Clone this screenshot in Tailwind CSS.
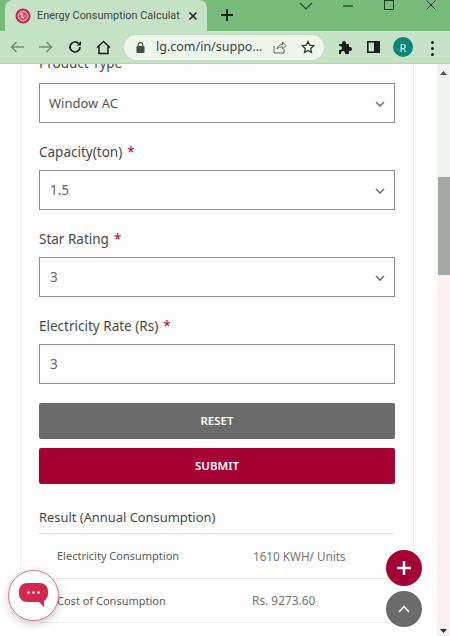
<!doctype html>
<html><head><meta charset="utf-8"><script src="https://cdn.jsdelivr.net/npm/@tailwindcss/browser@4"></script></head>
<body class="m-0 overflow-hidden">
<div class="relative w-[450px] h-[636px] overflow-hidden flex flex-col bg-white font-['Noto_Sans',sans-serif]">
  <!-- tab strip -->
  <div class="h-[31px] shrink-0 bg-[#76bb7c] flex items-end pl-[5px] relative">
    <div class="w-[202px] h-[31px] bg-[#c5e1c6] rounded-t-[8px] flex items-center pl-[10px] pr-[8px]">
      <svg width="16" height="16" viewBox="0 0 16 16" class="shrink-0"><circle cx="8" cy="8" r="7.5" fill="#c8274f"/><circle cx="8" cy="8" r="5" fill="#d65a78" stroke="#f2c0cc" stroke-width="1"/><path d="M7 4.500v5h2" stroke="#f6d5dc" stroke-width="1" fill="none"/><circle cx="5.500" cy="6" r=".8" fill="#f6d5dc"/></svg>
      <span class="ml-[6px] text-[10.900px] leading-[14px] text-[#3c4a3e] whitespace-nowrap w-[144px] font-['Roboto',sans-serif]">Energy Consumption Calculat</span>
      <svg width="10" height="10" viewBox="0 0 10 10" class="ml-[7px] shrink-0"><path d="M1.500 1.500l7 7M8.500 1.500l-7 7" stroke="#222" stroke-width="1.600"/></svg>
    </div>
    <svg width="12" height="12" viewBox="0 0 12 12" class="ml-[14px] mb-[10px]"><path d="M6 0v12M0 6h12" stroke="#1c1c1c" stroke-width="1.800"/></svg>
    <svg width="14" height="8" viewBox="0 0 14 8" class="absolute left-[299px] top-[2px]"><path d="M1 1l6 6 6-6" stroke="#2b4a30" stroke-width="1.100" fill="none"/></svg>
    <svg width="10" height="2" viewBox="0 0 10 2" class="absolute left-[343px] top-[5px]"><path d="M0 1h10" stroke="#1f3a24" stroke-width="1.200"/></svg>
    <svg width="10" height="10" viewBox="0 0 10 10" class="absolute left-[384px] top-[0px]"><rect x=".5" y=".5" width="9" height="9" fill="none" stroke="#1f3a24" stroke-width="1"/></svg>
    <svg width="10" height="10" viewBox="0 0 10 10" class="absolute left-[426px] top-[0px]"><path d="M.5.5l9 9M9.500.5l-9 9" stroke="#1f3a24" stroke-width="1"/></svg>
  </div>
  <!-- toolbar -->
  <div class="h-[33px] shrink-0 bg-[#c5e1c6] border-b border-[#b4d4b6] flex items-center relative">
    <svg width="14" height="12" viewBox="0 0 14 12" class="ml-[10px]"><path d="M14 6H1.500M6.500 1l-5 5 5 5" stroke="#7d8a7e" stroke-width="1.600" fill="none"/></svg>
    <svg width="14" height="12" viewBox="0 0 14 12" class="ml-[15px]"><path d="M0 6h12.500M7.500 1l5 5-5 5" stroke="#7d8a7e" stroke-width="1.600" fill="none"/></svg>
    <svg width="14" height="14" viewBox="0 0 14 14" class="ml-[15px]"><path d="M12 7a5 5 0 1 1-1.500-3.600" stroke="#1d1d1d" stroke-width="1.700" fill="none"/><path d="M13 1v4.500H8.500z" fill="#1d1d1d"/></svg>
    <svg width="15" height="15" viewBox="0 0 15 15" class="ml-[14px]"><path d="M1 7.500L7.500 1.500 14 7.500M3 6.500V13.500H12V6.500" stroke="#1d1d1d" stroke-width="1.500" fill="none"/></svg>
    <div class="ml-[13px] w-[200px] h-[25px] rounded-full bg-[#edf5ed] flex items-center pl-[12px]">
      <svg width="9" height="11" viewBox="0 0 9 11"><rect x="0.500" y="4" width="8" height="7" rx="1" fill="#444f46"/><path d="M2.200 4V2.800a2.300 2.300 0 0 1 4.600 0V4" stroke="#444f46" fill="none" stroke-width="1.100"/></svg>
      <span class="ml-[11px] text-[12.500px] leading-[16px] text-[#3b463d] whitespace-nowrap">lg.com/in/suppo...</span>
      <svg width="14" height="14" viewBox="0 0 14 14" class="absolute left-[273px]"><path d="M1 6v7h10V9" stroke="#5f6a60" stroke-width="1" fill="none"/><path d="M4 9c.5-3 3-4.500 5.500-4.500V2L13 5.500 9.500 9V6.800C7.500 6.800 5.500 7.500 4 9z" stroke="#5f6a60" fill="none" stroke-width="1"/></svg>
      <svg width="14" height="14" viewBox="0 0 14 14" class="absolute left-[301px]"><path d="M7 1.500l1.700 3.700 4 .5-3 2.700.8 4L7 10.500l-3.500 1.900.8-4-3-2.700 4-.5z" stroke="#303a32" stroke-width="1.300" fill="none"/></svg>
    </div>
    <svg width="14" height="14" viewBox="0 0 14 14" class="absolute left-[338px] top-[9px]"><path d="M1 4h3V3a2 2 0 0 1 4 0v1h3v3h1a2 2 0 0 1 0 4h-1v3H7v-1a2 2 0 0 0-4 0v1H1v-4h1a2 2 0 0 0 0-4H1z" fill="#1d1d1d"/></svg>
    <svg width="13" height="12" viewBox="0 0 13 12" class="absolute left-[367px] top-[10px]"><rect x=".8" y=".8" width="11.400" height="10.400" fill="none" stroke="#1d1d1d" stroke-width="1.600"/><rect x="7" y="1" width="5" height="10" fill="#1d1d1d"/></svg>
    <div class="absolute left-[393px] top-[6px] w-[20px] h-[20px] rounded-full bg-[#0a8577] flex items-center justify-center text-[11px] leading-none text-[#e3f2ef]">R</div>
    <div class="absolute left-[431px] top-[10px] flex flex-col gap-[3px]"><i class="block w-[3px] h-[3px] rounded-full bg-[#222]"></i><i class="block w-[3px] h-[3px] rounded-full bg-[#222]"></i><i class="block w-[3px] h-[3px] rounded-full bg-[#222]"></i></div>
  </div>
  <!-- page -->
  <div class="flex-1 flex min-h-0">
    <div class="w-[437px] bg-white overflow-hidden pl-[20px]">
      <div class="w-[394px] h-full bg-[#fdfdfd] border-x border-[#f1ecec] pl-[18px] pr-[18px] -mt-[14px] text-[#444]">
        <div class="text-[13.500px] leading-[27px] h-[33px] text-[#4a4a4a]">Product Type</div>
        <div class="h-[40px] border border-[#8f8f8f] flex items-center justify-between pl-[9px] pr-[9px] pt-[1px] text-[13px] text-[#555]">Window AC
          <svg width="10" height="6" viewBox="0 0 10 6"><path d="M1 1l4 4 4-4" stroke="#6b6b6b" stroke-width="1.500" fill="none"/></svg></div>
        <div class="h-[47px] flex items-center pt-[11px] text-[13.500px] text-[#4a4a4a]">Capacity(ton)<span class="ml-[5px] text-[#a50034]">*</span></div>
        <div class="h-[40px] border border-[#8f8f8f] flex items-center justify-between pl-[10px] pr-[9px] pt-[1px] text-[13.500px] text-[#666]">1.5
          <svg width="10" height="6" viewBox="0 0 10 6"><path d="M1 1l4 4 4-4" stroke="#6b6b6b" stroke-width="1.500" fill="none"/></svg></div>
        <div class="h-[47px] flex items-center pt-[11px] text-[13.500px] text-[#4a4a4a]">Star Rating<span class="ml-[5px] text-[#a50034]">*</span></div>
        <div class="h-[40px] border border-[#8f8f8f] flex items-center justify-between pl-[10px] pr-[9px] pt-[1px] text-[13.500px] text-[#666]">3
          <svg width="10" height="6" viewBox="0 0 10 6"><path d="M1 1l4 4 4-4" stroke="#6b6b6b" stroke-width="1.500" fill="none"/></svg></div>
        <div class="h-[47px] flex items-center pt-[11px] text-[13.500px] text-[#4a4a4a]">Electricity Rate (Rs)<span class="ml-[5px] text-[#a50034]">*</span></div>
        <div class="h-[40px] border border-[#8f8f8f] flex items-center pl-[10px] pt-[1px] text-[13.500px] text-[#666]">3</div>
        <div class="mt-[19px] h-[36px] bg-[#6b6b6b] rounded-[2px] flex items-center justify-center text-white text-[11.500px] font-semibold">RESET</div>
        <div class="mt-[9px] h-[36px] bg-[#a50034] rounded-[2px] flex items-center justify-center text-white text-[11.500px] font-semibold">SUBMIT</div>
        <div class="mt-[22px] h-[28px] text-[12.900px] leading-[22px] text-[#4a4a4a] border-b border-[#e8e8e8]">Result (Annual Consumption)</div>
        <div class="h-[45px] border-b border-[#f0eaea] flex items-center pl-[18px] pt-[1px] text-[11px] text-[#5c5c5c]"><span class="w-[196px]">Electricity Consumption</span><span class="text-[#777] text-[11.700px]">1610 KWH/ Units</span></div>
        <div class="h-[44px] border-b border-[#ebebeb] flex items-center pl-[18px] pt-[1px] text-[11px] text-[#5c5c5c]"><span class="w-[195px]">Cost of Consumption</span><span class="text-[#777] text-[11.900px]">Rs. 9273.60</span></div>
      </div>
    </div>
    <!-- scrollbar -->
    <div class="w-[13px] relative bg-[linear-gradient(#eef3ee_0,#eef3ee_211px,#f9f1f2_211px)]">
      <svg width="7" height="4" viewBox="0 0 7 4" class="absolute left-[3px] top-[7px]"><path d="M3.500 0L7 4H0z" fill="#555"/></svg>
      <div class="absolute left-[1px] top-[113px] w-[12px] h-[98px] bg-[#a6a8a6]"></div>
      <svg width="7" height="4" viewBox="0 0 7 4" class="absolute left-[3px] top-[565px]"><path d="M3.500 4L7 0H0z" fill="#333"/></svg>
    </div>
  </div>
  <!-- floating -->
  <div class="absolute left-[8px] top-[570px] w-[51px] h-[51px] rounded-full bg-white border border-[#d9718c] shadow-[0_3px_8px_rgba(0,0,0,.2)] flex items-center justify-center">
    <svg width="30" height="25" viewBox="0 0 30 25"><rect x="0" y="0" width="29" height="19" rx="8" fill="#d4264f"/><path d="M19 18l6 6v-6z" fill="#d4264f"/><circle cx="9.500" cy="9.500" r="1.200" fill="#fff"/><circle cx="14.500" cy="9.500" r="1.200" fill="#fff"/><circle cx="19.500" cy="9.500" r="1.200" fill="#fff"/></svg>
  </div>
  <div class="absolute left-[386px] top-[550px] w-[36px] h-[36px] rounded-full bg-[#a50034] flex items-center justify-center">
    <svg width="14" height="14" viewBox="0 0 14 14"><path d="M7 0v14M0 7h14" stroke="#fff" stroke-width="2.500"/></svg>
  </div>
  <div class="absolute left-[386px] top-[591px] w-[36px] h-[36px] rounded-full bg-[#6b6b6b] flex items-center justify-center">
    <svg width="12" height="8" viewBox="0 0 12 8"><path d="M1 7l5-5.500L11 7" stroke="#eee" stroke-width="1.800" fill="none"/></svg>
  </div>
</div>
</body></html>
